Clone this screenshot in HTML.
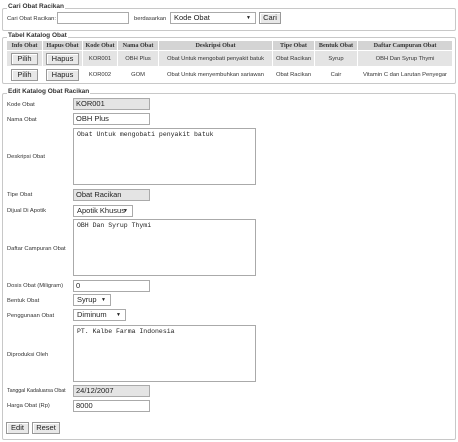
<!DOCTYPE html>
<html><head><meta charset="utf-8"><style>
*{box-sizing:border-box;margin:0;padding:0}
body{width:458px;height:442px;background:#fff;font-family:"Liberation Sans",sans-serif;font-size:6px;color:#333;position:relative;overflow:hidden}
.a{position:absolute}
.fs{position:absolute;border:1px solid #c8c8c8;border-radius:2px}
.lg{position:absolute;background:#fff;font-weight:bold;font-size:6.5px;color:#333;padding:0 1px;line-height:8px}
.inp{position:absolute;border:1px solid #aaa;background:#fff;font-size:7.5px;line-height:10px;padding-left:2px;color:#222}
.gr{background:#e4e4e4}
.ta{position:absolute;border:1px solid #aaa;background:#fff;font-family:"Liberation Mono",monospace;font-size:6.5px;padding:2px 3px;color:#222}
.sel{position:absolute;border:1px solid #aaa;background:#fff;font-size:7.5px;line-height:10px;padding-left:3px;padding-right:12px;color:#222;white-space:nowrap;overflow:hidden}
.sel:after{content:"▼";position:absolute;right:4px;top:0;font-size:5px}
.btn{position:absolute;border:1px solid #999;background:#e8e8e8;font-size:7.5px;line-height:10px;text-align:center;color:#222;box-shadow:inset 1px 1px 0 #fff}
.lb{position:absolute;left:7px;font-size:5.8px;line-height:8px;white-space:nowrap}
table{position:absolute;left:6px;top:40px;width:446px;border-collapse:collapse;font-size:5.8px;table-layout:fixed}
td,th{border:1px solid #fff;text-align:center;padding:0;overflow:hidden;white-space:nowrap}
th{background:#d4d4d4;height:10px;font-family:"Liberation Serif",serif;font-size:6.2px}
tr.r1 td{background:#e4e4e4;height:16px}
tr.r2 td{background:#fff;height:16px}
td .btn{position:relative;display:inline-block;padding:0 5px}
</style></head><body>
<div class="fs" style="left:2px;top:8px;width:454px;height:23px"></div>
<div class="lg" style="left:7px;top:3px">Cari Obat Racikan</div>
<div class="a" style="left:7px;top:15px;font-size:5.8px;line-height:8px">Cari Obat Racikan:</div>
<div class="inp" style="left:57px;top:12px;width:72px;height:12px"></div>
<div class="a" style="left:134px;top:15px;font-size:5.8px;line-height:8px">berdasarkan</div>
<div class="sel" style="left:170px;top:12px;width:86px;height:12px">Kode Obat</div>
<div class="btn" style="left:259px;top:12px;width:22px;height:12px">Cari</div>

<div class="fs" style="left:2px;top:37px;width:454px;height:47px"></div>
<div class="lg" style="left:7px;top:32px">Tabel Katalog Obat</div>
<table>
<colgroup><col style="width:36px"><col style="width:40px"><col style="width:35px"><col style="width:41px"><col style="width:114px"><col style="width:42px"><col style="width:43px"><col style="width:95px"></colgroup>
<tr><th>Info Obat</th><th>Hapus Obat</th><th>Kode Obat</th><th>Nama Obat</th><th>Deskripsi Obat</th><th>Tipe Obat</th><th>Bentuk Obat</th><th>Daftar Campuran Obat</th></tr>
<tr class="r1"><td><span class="btn">Pilih</span></td><td><span class="btn">Hapus</span></td><td>KOR001</td><td>OBH Plus</td><td>Obat Untuk mengobati penyakit batuk</td><td>Obat Racikan</td><td>Syrup</td><td>OBH Dan Syrup Thymi</td></tr>
<tr class="r2"><td><span class="btn">Pilih</span></td><td><span class="btn">Hapus</span></td><td>KOR002</td><td>GOM</td><td>Obat Untuk menyembuhkan sariawan</td><td>Obat Racikan</td><td>Cair</td><td>Vitamin C dan Larutan Penyegar</td></tr>
</table>

<div class="fs" style="left:2px;top:93px;width:454px;height:347px"></div>
<div class="lg" style="left:7px;top:88px">Edit Katalog Obat Racikan</div>

<div class="lb" style="top:101px">Kode Obat</div>
<div class="inp gr" style="left:73px;top:98px;width:77px;height:12px">KOR001</div>
<div class="lb" style="top:116px">Nama Obat</div>
<div class="inp" style="left:73px;top:113px;width:77px;height:12px">OBH Plus</div>
<div class="lb" style="top:153px">Deskripsi Obat</div>
<div class="ta" style="left:73px;top:128px;width:183px;height:57px">Obat Untuk mengobati penyakit batuk</div>
<div class="lb" style="top:191px">Tipe Obat</div>
<div class="inp gr" style="left:73px;top:189px;width:77px;height:12px">Obat Racikan</div>
<div class="lb" style="top:207px">Dijual Di Apotik</div>
<div class="sel" style="left:73px;top:205px;width:60px;height:12px">Apotik Khusus</div>
<div class="lb" style="top:245px">Daftar Campuran Obat</div>
<div class="ta" style="left:73px;top:219px;width:183px;height:57px">OBH Dan Syrup Thymi</div>
<div class="lb" style="top:282px">Dosis Obat (Miligram)</div>
<div class="inp" style="left:73px;top:280px;width:77px;height:12px">0</div>
<div class="lb" style="top:297px">Bentuk Obat</div>
<div class="sel" style="left:73px;top:294px;width:38px;height:12px">Syrup</div>
<div class="lb" style="top:312px">Penggunaan Obat</div>
<div class="sel" style="left:73px;top:309px;width:53px;height:12px">Diminum</div>
<div class="lb" style="top:351px">Diproduksi Oleh</div>
<div class="ta" style="left:73px;top:325px;width:183px;height:57px">PT. Kalbe Farma Indonesia</div>
<div class="lb" style="top:387px;font-size:5.4px;letter-spacing:-0.1px">Tanggal Kadaluarsa Obat</div>
<div class="inp gr" style="left:73px;top:385px;width:77px;height:12px">24/12/2007</div>
<div class="lb" style="top:402px">Harga Obat (Rp)</div>
<div class="inp" style="left:73px;top:400px;width:77px;height:12px">8000</div>

<div class="btn" style="left:6px;top:422px;width:23px;height:12px">Edit</div>
<div class="btn" style="left:32px;top:422px;width:28px;height:12px">Reset</div>
</body></html>
